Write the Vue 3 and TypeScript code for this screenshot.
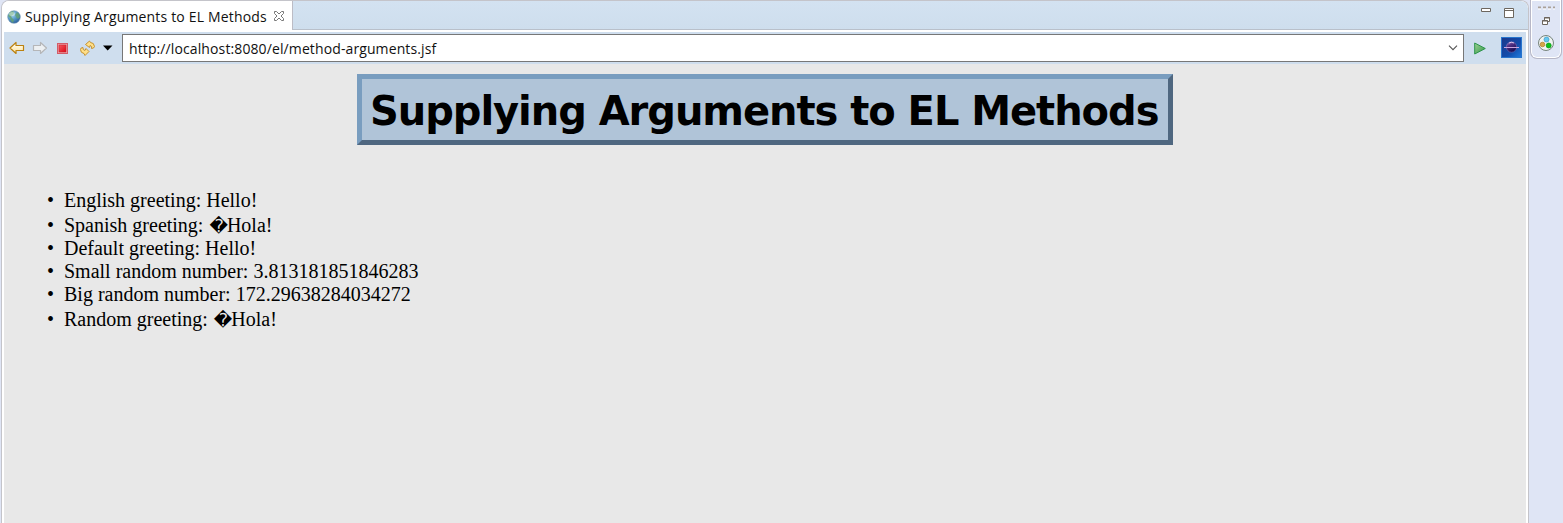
<script setup lang="ts">
interface Result {
  label: string
  value: string
  fallback?: boolean
}

const title = 'Supplying Arguments to EL Methods'
const address = 'http://localhost:8080/el/method-arguments.jsf'
const results: Result[] = [
  { label: 'English greeting: ', value: 'Hello!' },
  { label: 'Spanish greeting: ', value: 'Hola!', fallback: true },
  { label: 'Default greeting: ', value: 'Hello!' },
  { label: 'Small random number: ', value: '3.813181851846283' },
  { label: 'Big random number: ', value: '172.29638284034272' },
  { label: 'Random greeting: ', value: 'Hola!', fallback: true },
]
</script>

<template>
  <div class="workbench">
    <section class="editor">
      <header class="tabs">
        <div class="tab">
          <svg class="globe" width="14" height="14" viewBox="0 0 14 14">
            <defs>
              <radialGradient id="sea" cx=".35" cy=".3" r=".75">
                <stop offset="0" stop-color="#b5dcf0" />
                <stop offset=".5" stop-color="#599dcb" />
                <stop offset="1" stop-color="#285c98" />
              </radialGradient>
            </defs>
            <circle cx="7" cy="7" r="6.3" fill="url(#sea)" stroke="#7197b5" stroke-width=".6" />
            <path d="M3 2 6 1 7 3 6 5 4 6 5 8 7 10 6 13 4 11 3 8 1 6ZM10 2 12 4 13 7 11 9 9 7 8 5Z" fill="#64a16f" opacity=".8" />
            <ellipse cx="5" cy="4" rx="3" ry="2" fill="#e5f6ee" opacity=".45" />
          </svg>
          <span class="tab-title">{{ title }}</span>
          <svg class="close" width="12" height="12" viewBox="0 0 12 12">
            <path d="M1.5 1.5h2L6 4l2.500-2.500h2v2L8 6l2.500 2.500v2h-2L6 8l-2.500 2.500h-2v-2L4 6 1.500 3.500Z" fill="#fff" stroke="#777" />
          </svg>
        </div>
        <div class="tab-rest">
          <svg width="34" height="12" viewBox="0 0 34 12">
            <path d="M.5.500h9v3h-9Z" fill="#fff" stroke="#6d675f" />
            <path d="M23.500.500h9v9h-9ZM23.500 2.500h9" fill="#fff" stroke="#6d675f" />
          </svg>
        </div>
      </header>
      <nav class="toolbar">
        <svg class="tools" width="118" height="32" viewBox="0 0 118 32">
          <defs>
            <linearGradient id="gold" x2="0" y2="1">
              <stop stop-color="#fff" /><stop offset="1" stop-color="#ffe295" />
            </linearGradient>
            <linearGradient id="red" x2="1" y2="1">
              <stop stop-color="#f25b60" /><stop offset="1" stop-color="#dc0716" />
            </linearGradient>
          </defs>
          <path d="M6 16 12 10.500V13.500H19.500V18.500H12V21.500Z" fill="url(#gold)" stroke="#bb8110" stroke-width="1.200" stroke-linejoin="round" />
          <path d="M42.500 16 36.500 10.500V13.500H29.500V18.500H36.500V21.500Z" fill="#edf0f2" stroke="#b5b6b8" stroke-width="1.200" stroke-linejoin="round" />
          <rect x="53.500" y="11.500" width="10" height="10" fill="#eca7ad" stroke="#d25c68" />
          <rect x="55" y="13" width="7" height="7" fill="url(#red)" stroke="#d11f2b" stroke-width=".6" />
          <g fill="#ffdf88" stroke="#c18a25" stroke-width=".9" stroke-linejoin="round">
            <path d="M81.500 12.500 85.500 9 86.500 10.500Q90 10.500 90.500 14.500Q90 16.500 87.500 16.500Q88.500 14 86 13.500L85.500 15.500Z" />
            <path d="M85 19.500 81 23.500 80 21.500Q76.500 21 76.500 17.500Q76.500 15.500 79 15.500Q78.500 18 81 18.500L82 16.500Z" />
          </g>
          <path d="M99 13.500h9.500L103.700 18.500Z" fill="#000" />
        </svg>
        <div class="address">
          <span class="url">{{ address }}</span>
          <svg width="10" height="6" viewBox="0 0 10 6"><path d="m1 .7 4 4 4-4" fill="none" stroke="#555" stroke-width="1.100" /></svg>
        </div>
        <svg class="go" width="12" height="13" viewBox="0 0 12 13">
          <defs><linearGradient id="play" x2="1" y2="1"><stop stop-color="#9ed192" /><stop offset="1" stop-color="#329748" /></linearGradient></defs>
          <path d="M.7 1 11.300 6.500.7 12Z" fill="url(#play)" stroke="#2c944a" stroke-linejoin="round" />
        </svg>
        <svg class="eclipse" width="21" height="21" viewBox="0 0 21 21">
          <defs>
            <linearGradient id="space" x2="1" y2="1"><stop stop-color="#1d3788" /><stop offset=".6" stop-color="#124dac" /><stop offset="1" stop-color="#227bdc" /></linearGradient>
            <linearGradient id="moon" x2=".5" y2="1"><stop stop-color="#b095d3" /><stop offset=".4" stop-color="#513083" /><stop offset="1" stop-color="#130c51" /></linearGradient>
          </defs>
          <rect x=".5" y=".5" width="20" height="20" fill="url(#space)" stroke="#2875cd" />
          <circle cx="10.500" cy="10" r="5.200" fill="url(#moon)" stroke="#786cb9" stroke-width=".6" />
          <path d="M3 10.500H18" stroke="#cba6df" />
          <path d="M8 6Q10 4.500 13 6" fill="none" stroke="#ddc5e8" />
        </svg>
      </nav>
      <main class="page">
        <h1>{{ title }}</h1>
        <ul>
          <li v-for="(item, index) in results" :key="index" :class="{ fallback: item.fallback }">
            {{ item.label }}<span v-if="item.fallback" class="unknown">&#xfffd;</span>{{ item.value }}
          </li>
        </ul>
      </main>
    </section>
    <aside class="side">
      <div class="dock">
        <svg width="31" height="58" viewBox="0 0 31 58">
          <path d="M7 7.500h17" stroke="#aaa19a" stroke-width="2" stroke-dasharray="3 2" />
          <path d="M7 9h17" stroke="#fff" stroke-dasharray="3 2" />
          <g fill="#fff" stroke="#6c655d"><path d="M13.500 17.500h5v4h-5ZM13 18h6" /><path d="M11.500 20.500h5v4h-5ZM11 21h6" /></g>
          <circle cx="15" cy="43" r="7.500" fill="#f0f4f2" stroke="#77847c" />
          <circle cx="15.500" cy="39.500" r="2.500" fill="#67c7ef" stroke="#389acb" stroke-width=".7" />
          <circle cx="11.500" cy="44.500" r="2.300" fill="#d5a64a" stroke="#ad7a22" stroke-width=".7" />
          <circle cx="17.700" cy="45.500" r="2.500" fill="#0bc21a" stroke="#079512" stroke-width=".7" />
        </svg>
      </div>
    </aside>
  </div>
</template>

<style>
body { margin: 0; overflow: hidden; }
</style>

<style scoped>
* { box-sizing: border-box; }
svg { display: block; flex: none; }
.workbench { width: 1563px; height: 523px; display: flex; background: #dfe5f5; }
.editor { width: 1528px; margin-left: 1px; border: solid #c4c4ca; border-width: 1px 1px 0; border-radius: 8px 8px 0 0; background: #fff; overflow: hidden; }
.tabs { height: 30px; display: flex; }
.tab { width: 290px; padding-left: 5px; display: flex; align-items: center; background: #fff; }
.tab-title, .url { font-family: "Open Sans", "Noto Sans", sans-serif; color: #111; white-space: nowrap; }
.tab-title { width: 244px; margin-left: 4px; font-size: 14px; letter-spacing: .17px; }
.close { margin-left: 4px; }
.globe { margin-top: 1px; }
.tab-rest { flex: 1; height: 29px; border-left: 1px solid #bcbcc5; border-bottom: 1px solid #b9c0ca; border-radius: 0 7px 0 0; background: linear-gradient(#d3e2f1, #cedeed); display: flex; justify-content: flex-end; padding: 7px 13px 0; }
.toolbar { height: 32px; margin: 1px 2px 0; background: #cfdeee; display: flex; align-items: center; }
.address { width: 1342px; height: 28px; border: 1px solid #777; background: #fff; display: flex; align-items: center; justify-content: space-between; padding: 0 5px 0 6px; }
.url { font-size: 14px; letter-spacing: .11px; }
.go { margin-left: 10px; margin-top: 1px; }
.eclipse { margin-left: 15px; margin-top: -1px; }
.page { height: 459px; margin: 0 2px; padding-top: 10px; background: #e8e8e8; color: #000; }
h1 { width: 816px; height: 71px; margin: 0 auto 44px 353px; padding-left: 8px; border: 5px solid; border-color: #799dbf #4f6780 #4f6780 #799dbf; background: #b0c4d8; font: bold 40px/64px "DejaVu Sans", sans-serif; letter-spacing: -1.04px; white-space: nowrap; }
ul { margin: 0; padding: 0 0 0 60px; list-style: none; font: 20px/23px "Liberation Serif", serif; }
li { height: 23px; white-space: nowrap; }
li::before { content: "•"; display: inline-block; width: 17px; margin-left: -17px; }
li.fallback { height: 25px; padding-top: 2px; }
.unknown { margin: 0 -1px 0 1px; font-family: "DejaVu Sans", sans-serif; font-size: 18px; line-height: 1; }
.side { flex: 1; padding-left: 1px; }
.dock { width: 32px; height: 59px; border: 1px solid #b7b7c7; border-top: 0; border-radius: 0 0 7px 7px; box-shadow: inset 0 0 0 1px #fff; }
</style>
